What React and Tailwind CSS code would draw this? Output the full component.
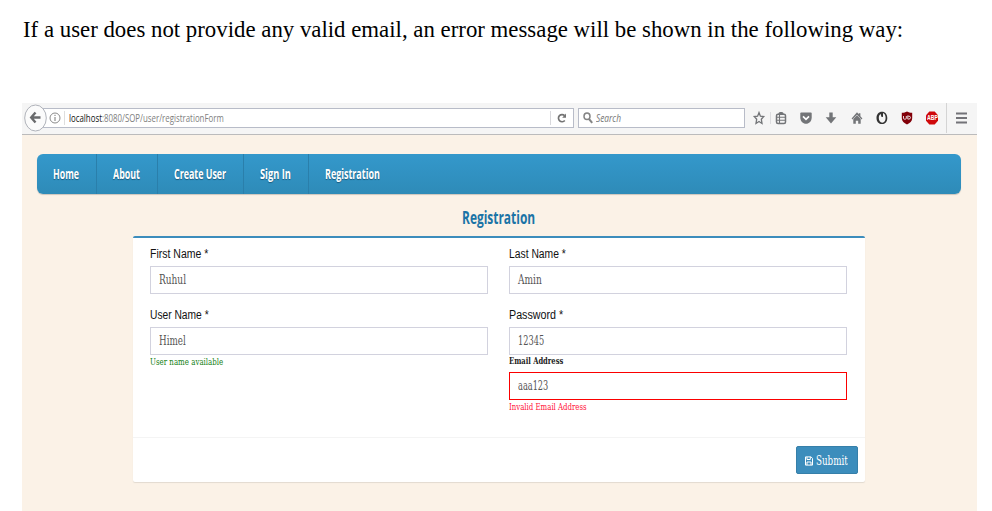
import { useLayoutEffect, useRef } from "react";

// Condenses a line of text horizontally so that it fills its box's width.
function Fit({ className = "", children }) {
  const box = useRef(null);
  const text = useRef(null);
  useLayoutEffect(() => {
    const fit = () => {
      if (!box.current || !text.current) return;
      text.current.style.transform = `scaleX(${box.current.clientWidth / text.current.offsetWidth})`;
    };
    fit();
    document.fonts.ready.then(fit);
  }, []);
  return (
    <span ref={box} className={`block shrink-0 whitespace-nowrap ${className}`}>
      <span ref={text} className="inline-block origin-left">{children}</span>
    </span>
  );
}

const SERIF = "font-['DejaVu_Serif',serif]";

function Field({ value, width, invalid }) {
  return (
    <div className={`flex h-7 w-[338px] border pl-2 ${invalid ? "border-[#fb0000]" : "border-[#d2d2de]"}`}>
      <Fit className={`${SERIF} text-[12px] leading-[26px] text-[#555] ${width}`}>{value}</Fit>
    </div>
  );
}

function Label({ width, children }) {
  return (
    <Fit className={`h-[30px] font-['Liberation_Sans',sans-serif] text-[12.5px] leading-[36px] text-[#111] ${width}`}>
      {children}
    </Fit>
  );
}

function NavItem({ cell, width, last, children }) {
  return (
    <div className={`flex h-10 shrink-0 pl-4 ${last ? "" : "border-r border-[#2a7fab]"} ${cell}`}>
      <Fit className={`font-['Open_Sans',sans-serif] text-[13.5px] leading-[41px] font-bold text-white text-shadow-[0_1px_1px_#1b5b7e] ${width}`}>
        {children}
      </Fit>
    </div>
  );
}

function ToolIcon({ cell, children }) {
  return (
    <div className={`flex shrink-0 justify-center ${cell}`}>
      <svg className="h-4 w-3.5" viewBox="0 0 14 16" fill="none">{children}</svg>
    </div>
  );
}

function Toolbar() {
  return (
    <div className="flex h-8 items-center border-b border-[#bbbbbc] bg-[#f5f5f5] pb-px">
      <svg className="relative z-10 ml-0.5 h-7 w-[23px] shrink-0" viewBox="0 0 23 28" fill="none">
        <ellipse cx="11.5" cy="14" rx="10.8" ry="13" fill="#fbfbfb" stroke="#b0b3ba" />
        <path d="M16.5 13.5H7.5M11.5 8.5l-4.3 5 4.3 5" stroke="#6a6b6d" strokeWidth="2.4" />
      </svg>
      <div className="-ml-2 flex h-5 w-[535px] shrink-0 items-center border border-[#b8bcc8] bg-white">
        <svg className="ml-[9px] h-3 w-3 shrink-0" viewBox="0 0 12 12" fill="none">
          <circle cx="6" cy="6" r="5" stroke="#8b8b8b" />
          <path d="M6 5v4M6 2.8v1.2" stroke="#777" />
        </svg>
        <div className="ml-[3px] h-3.5 w-px bg-[#dedede]" />
        <Fit className="ml-1 w-[155px] font-['Open_Sans',sans-serif] text-[10px] leading-[21px] text-[#808080]">
          <span className="text-[#111]">localhost</span>:8080/SOP/user/registrationForm
        </Fit>
        <div className="ml-auto h-3.5 w-px bg-[#d8d8dc]" />
        <svg className="mr-[6px] ml-[6px] h-2.5 w-2.5" viewBox="0 0 10 10" fill="none">
          <path d="M7.8 7.5A3.6 3.6 0 1 1 7.6 2.6" stroke="#747474" strokeWidth="1.7" />
          <path d="M9 .5v4.2H5.2z" fill="#747474" />
        </svg>
      </div>
      <div className="ml-1 flex h-5 w-[167px] shrink-0 items-center border border-[#b8bcc8] bg-white">
        <svg className="ml-1 h-3 w-[10px]" viewBox="0 0 10 12" fill="none">
          <ellipse cx="4" cy="4.2" rx="3" ry="3.3" stroke="#858585" strokeWidth="1.5" />
          <path d="M6 7l3.2 3.8" stroke="#858585" strokeWidth="2" />
        </svg>
        <Fit className="ml-[3px] w-[25px] font-['Open_Sans',sans-serif] text-[10px] leading-[21px] text-[#777] italic">Search</Fit>
      </div>
      <div className="ml-[3px] flex shrink-0">
        <ToolIcon cell="w-[22px]">
          <path d="M7 2.5l1.4 3.7 3.3.3-2.4 2.7.7 4.3L7 11.5l-3 2 .7-4.3-2.4-2.7 3.3-.3z" stroke="#737578" strokeWidth="1.3" />
        </ToolIcon>
        <div className="mt-[2px] h-3 w-px bg-[#dcdcdf]" />
        <ToolIcon cell="w-[20px]">
          <rect x="2.5" y="4.2" width="9" height="9.2" rx="1.5" stroke="#737578" strokeWidth="1.5" />
          <path d="M4.500 4.200V3L5.800 2h2.400l1.300 1v1.200z" fill="#737578" />
          <path d="M3 7.300h8M3 10.300h8M5.500 5v8" stroke="#737578" strokeWidth="1.1" />
        </ToolIcon>
        <ToolIcon cell="w-[29.5px]">
          <path d="M1.300 3.400q0-.9.9-.9h9.600q.9 0 .9.9v4.100c0 3.800-2.600 6.300-5.700 6.300S1.300 11.300 1.300 7.500z" fill="#737578" />
          <path d="M4 6.300l3 3 3-3" stroke="#fff" strokeWidth="1.7" />
        </ToolIcon>
        <ToolIcon cell="w-[21.5px]">
          <path d="M5.300 2.500h3.400v4.700h3.600L7 13.500 1.700 7.200h3.600z" fill="#737578" />
        </ToolIcon>
        <ToolIcon cell="w-[29px]">
          <path d="M7 2.300l1.800 2V3.300h1.600v3l2 2.300-.8.8L7 4.800 2.400 9.400l-.8-.8z" fill="#737578" />
          <path d="M3.300 9L7 5.200 10.700 9v4.700H8.200v-3H5.800v3H3.300z" fill="#737578" />
        </ToolIcon>
        <ToolIcon cell="w-[21.5px]">
          <path fillRule="evenodd" d="M7 1.700c3.300 0 5.300 2.600 5.300 6.200S10.300 14 7 14 1.500 11.500 1.500 7.900 3.700 1.700 7 1.700zM8 3v4L6.300 6.700 5.800 4C4.300 4.800 3.800 6.200 3.800 8c0 2.700 1.300 4.700 3.500 4.700S10.600 10.700 10.600 8 9.800 3.800 8 3z" fill="#333" />
        </ToolIcon>
        <ToolIcon cell="w-[28.5px]">
          <path d="M7 1.600c1.500 1 3.200 1.200 5.200 1.200v5.400c0 3-2.200 4.700-5.200 6.200-3-1.500-5.200-3.200-5.200-6.200V2.800C3.800 2.800 5.500 2.600 7 1.600z" fill="#820009" />
          <path d="M3.500 6v2.200q0 1 1 1h.8q1 0 1-1V6M7.800 5.500v3.600h1q1.700 0 1.700-1.600 0-1.300-1.700-1.300h-1" stroke="#eee" strokeWidth=".9" />
        </ToolIcon>
        <div className="flex w-[22px] shrink-0 justify-center">
          <div className="relative h-4 w-3.5">
            <svg className="absolute inset-0 h-4 w-3.5" viewBox="0 0 14 16">
              <path d="M4.300 1.500h5.400l3.300 3.700v5.600l-3.300 3.700H4.300L1 10.800V5.200z" fill="#cf090b" />
            </svg>
            <Fit className="absolute top-0 left-[1.5px] w-[11px] font-['Liberation_Sans',sans-serif] text-[8px] leading-4 font-bold text-white">ABP</Fit>
          </div>
        </div>
      </div>
      <div className="ml-[3px] h-[30px] w-px bg-[#d4d4d4]" />
      <svg className="ml-[9px] h-3 w-[11px]" viewBox="0 0 11 12">
        <path d="M0 1.500h11M0 6h11M0 10.500h11" stroke="#737378" strokeWidth="1.800" />
      </svg>
    </div>
  );
}

export default function App() {
  return (
    <div className="h-[511px] w-[992px] overflow-hidden bg-white">
      <div className="h-[103px] pt-[14px] pl-[23px]">
        <Fit className="w-[880px] font-['Liberation_Serif',serif] text-[23px] leading-8 text-black">
          If a user does not provide any valid email, an error message will be shown in the following way:
        </Fit>
      </div>
      <div className="ml-[22px] h-[408px] w-[955px] bg-[#fbf2e7]">
        <Toolbar />
        <nav className="mt-[19px] ml-[14.5px] flex h-10 w-[924.5px] rounded-[6px] bg-linear-to-b from-[#3498cb] to-[#2e8bb8] shadow-[0_1px_1px_#00000030]">
          <NavItem cell="w-[60.5px]" width="w-[26px]">Home</NavItem>
          <NavItem cell="w-[61px]" width="w-[27px]">About</NavItem>
          <NavItem cell="w-[86px]" width="w-[52px]">Create User</NavItem>
          <NavItem cell="w-[65px]" width="w-[31px]">Sign In</NavItem>
          <NavItem cell="w-[73px]" width="w-[55px]" last>Registration</NavItem>
        </nav>
        <Fit className="ml-[440px] h-[42px] w-[73px] font-['Open_Sans',sans-serif] text-[17.5px] leading-[47px] font-bold text-[#1b74a6]">Registration</Fit>
        <main className="ml-[111px] h-[246px] w-[731.5px] rounded-[2px] border-t-2 border-[#3c8dbc] bg-white shadow-[0_1px_1px_#0000001a]">
          <div className="flex h-[199px] justify-between pr-[17.5px] pl-[17px]">
            <div className="-mt-0.5">
              <Label width="w-[58px]">First Name *</Label>
              <Field value="Ruhul" width="w-[27px]" />
              <div className="h-[3px]" />
              <Label width="w-[59px]">User Name *</Label>
              <Field value="Himel" width="w-[27px]" />
              <Fit className={`${SERIF} w-[73px] text-[8.5px] leading-[15px] text-[#138013]`}>User name available</Fit>
            </div>
            <div className="-mt-0.5">
              <Label width="w-[57px]">Last Name *</Label>
              <Field value="Amin" width="w-[24px]" />
              <div className="h-[3px]" />
              <Label width="w-[54px]">Password *</Label>
              <Field value="12345" width="w-[26px]" />
              <Fit className={`${SERIF} h-[17px] w-[53.5px] text-[8.5px] leading-[13px] font-bold text-[#222]`}>Email Address</Fit>
              <Field value="aaa123" width="w-[30px]" invalid />
              <Fit className={`${SERIF} w-[78px] text-[8.5px] leading-[15px] text-[#ff1038]`}>Invalid Email Address</Fit>
            </div>
          </div>
          <div className="flex h-[45px] justify-end border-t border-[#f4f4f4] pt-2 pr-[6.5px]">
            <button className="flex h-7 w-[62px] items-center rounded-[2px] border border-[#367fa9] bg-[#3c8dbc] pl-2">
              <svg className="mt-0.5 h-2.5 w-2 shrink-0" viewBox="0 0 8 10" fill="none" stroke="white">
                <path d="M.5.9h5.6L7.5 2.5v6.600h-7z" />
                <path d="M2 1v2.500h3.300V1M2 9V6h4v3" />
              </svg>
              <Fit className={`${SERIF} mt-0.5 ml-[3px] w-[32px] text-[12px] leading-[26px] text-white`}>Submit</Fit>
            </button>
          </div>
        </main>
      </div>
    </div>
  );
}
